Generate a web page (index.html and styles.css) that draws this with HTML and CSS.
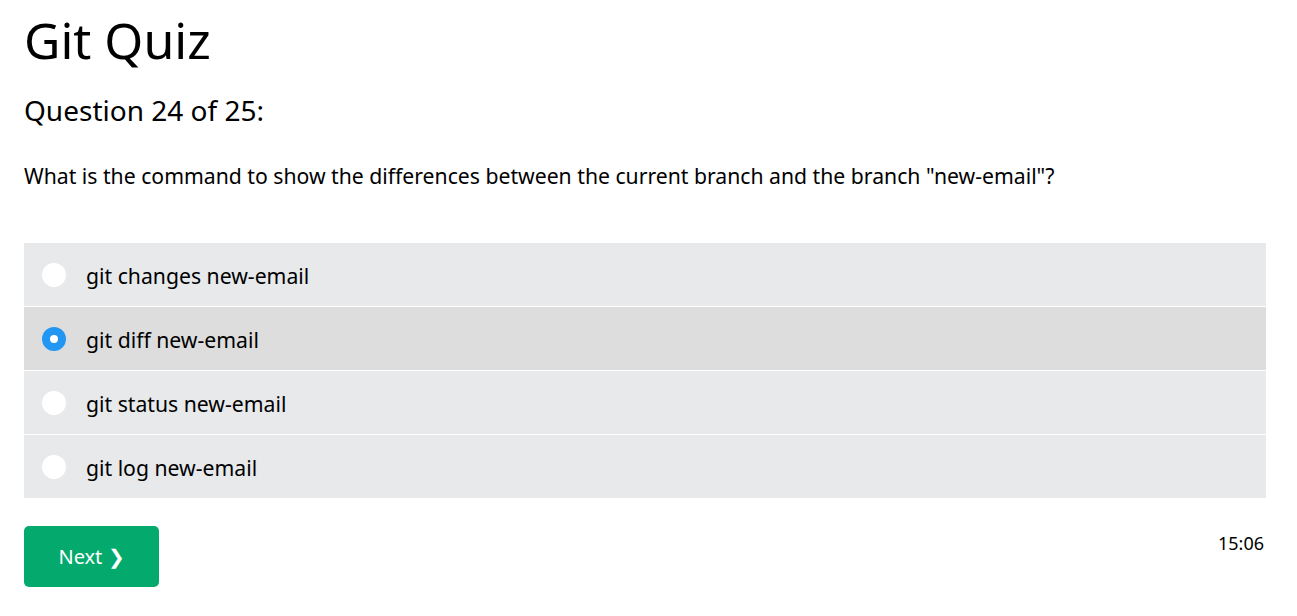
FILE: index.html
```html
<!DOCTYPE html>
<html>
<head>
<meta charset="utf-8">
<link rel="stylesheet" href="styles.css">
</head>
<body>
<div class="page">
  <h1 class="title">Git Quiz</h1>
  <h2 class="qnum">Question 24 of 25:</h2>
  <p class="qtext">What is the command to show the differences between the current branch and the branch "new-email"?</p>
  <div class="options">
    <label class="opt"><span class="radio"></span><span class="otext">git changes new-email</span></label>
    <label class="opt sel"><span class="radio on"></span><span class="otext">git diff new-email</span></label>
    <label class="opt"><span class="radio"></span><span class="otext">git status new-email</span></label>
    <label class="opt"><span class="radio"></span><span class="otext">git log new-email</span></label>
  </div>
  <div class="footer">
    <button class="next">Next ❯</button>
    <div class="timer">15:06</div>
  </div>
</div>
</body>
</html>
```
FILE: styles.css
```css
html, body { margin: 0; padding: 0; background: #fff; }
body { font-family: "Noto Sans", "Open Sans", sans-serif; color: #000; }
.page { padding: 0 31px 0 24px; }
.title { font-size: 50px; font-weight: 400; margin: 0; padding-top: 7px; line-height: 66px; }
.qnum { font-size: 28px; font-weight: 400; margin: 0; padding-top: 17px; line-height: 40px; }
.qtext { font-size: 21.2px; margin: 0; padding-top: 31px; line-height: 30px; }
.options { margin-top: 52px; display: flex; flex-direction: column; gap: 1px; }
.opt { display: flex; align-items: center; height: 63px; background: #e7e9eb; padding-left: 18px; }
.opt.sel { background: #dddddd; }
.radio { width: 24px; height: 24px; border-radius: 50%; background: #fff; box-sizing: border-box; flex: none; }
.radio.on { background: #fff; border: 8px solid #2196f3; }
.otext { font-size: 21.2px; margin-left: 20px; padding-top: 2px; }
.footer { display: flex; justify-content: space-between; align-items: flex-start; margin-top: 28px; }
.next { background: #04aa6d; color: #fff; border: none; border-radius: 5px; width: 135px; height: 61px; font-family: inherit; font-size: 20px; padding: 0; }
.timer { font-size: 18px; padding-top: 5px; padding-right: 2px; }
```
